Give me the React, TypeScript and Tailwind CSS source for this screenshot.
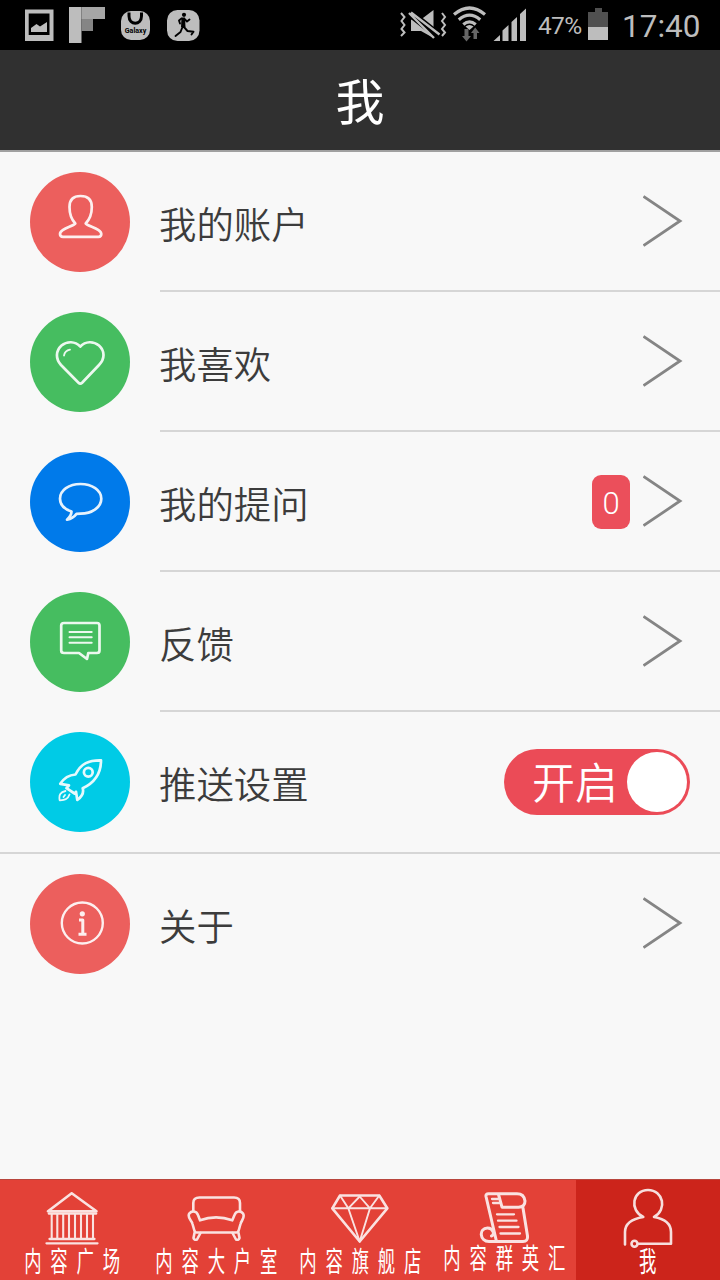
import React, { useState } from 'react';
import clsx from 'clsx';

const FONT = "font-['Roboto','Noto_Sans_CJK_SC',sans-serif]";
const STROKE = { fill: 'none', stroke: '#fff', strokeLinecap: 'round', strokeLinejoin: 'round' } as const;

interface Item { id: string; label: string; color: string; icon: React.ReactNode; badge?: number; toggle?: boolean; }

const ITEMS: Item[] = [
  {
    id: 'account', label: '我的账户', color: 'bg-[#ec5f5d]',
    icon: <path d="M45.3 51.5C41 47 39.5 42 39.5 35C39.5 27.5 43.5 24 50.5 24S61.8 27.5 61.8 35C61.8 42 60 47 55.7 51.5C57.5 54.5 71.3 56.5 71.3 62Q71.3 64.8 68.5 64.8H33Q30 64.8 30 62C30 56.5 43.5 54.5 45.3 51.5Z" />,
  },
  {
    id: 'likes', label: '我喜欢', color: 'bg-[#46bd60]',
    icon: <><path d="M50.3 34.5C45 29 37 29 31.5 33.5C25.5 39 25.5 47 31 53L48.5 70.7Q50.3 72.5 52.1 70.7L69 53C75 47 75 39 69 33.5C63.5 29 55.5 29 50.3 34.5Z" /><path d="M34 43.5Q34.8 38.7 40 37.7" strokeWidth="1.8" /></>,
  },
  {
    id: 'questions', label: '我的提问', color: 'bg-[#007aea]', badge: 0,
    icon: <path d="M41.5 59.5C34 57 30 52.5 30 46.7C30 38.3 39 32 50.5 32S71.3 38.3 71.3 46.7S62 61.7 50.5 61.7L46.5 61.9Q43 66.5 37 67.7Q41.5 63.5 41.5 59.5Z" />,
  },
  {
    id: 'feedback', label: '反馈', color: 'bg-[#46bd60]',
    icon: <><path d="M34 31H67Q69.5 31 69.5 33.5V58.5Q69.5 61 67 61H58.3L57 67L49 61H34Q31.2 61 31.2 58.5V33.5Q31.2 31 34 31Z" /><path d="M39.5 40H61.7M39.5 45.3H61.7M39.5 50.7H61.7" strokeWidth="2" /></>,
  },
  {
    id: 'push', label: '推送设置', color: 'bg-[#00cbe6]', toggle: true,
    icon: <><path d="M71 28.3C59 28 51 31.5 45.5 42.5C38 43 33 47.5 30.3 51.8L39 53.3L36.5 56.2L44.5 61.5L46 59.8L47.3 68C52 64.5 54 60.5 52.7 56.3C66 50 71 41 71 28.3Z" /><circle cx="58.3" cy="40.2" r="4.4" /><path d="M35.5 59Q28 60.5 29.7 68.3Q37.5 68.5 39.5 62.5M35 63L33.5 65" strokeWidth="1.8" /></>,
  },
  {
    id: 'about', label: '关于', color: 'bg-[#ec5f5d]',
    icon: <><circle cx="52.3" cy="49" r="20.5" strokeWidth="2.4" /><circle cx="52.3" cy="39.8" r="2.6" fill="#fff" stroke="none" /><path d="M49 46H52.8V60M48.5 60.3H56.5" strokeWidth="3" strokeLinecap="butt" /></>,
  },
];

const TABS = [
  {
    id: 'square', label: '内容广场',
    icon: <><path d="M71.7 14.3L48 32.3H96.5Z" /><path d="M49 34.5H96" /><path d="M51.7 35V59M57.3 35V59M63.2 35V59M69 35V59M75 35V59M81 35V59M87 35V59M93 35V59" strokeWidth="2.1" /><path d="M49.5 60H94.5M46.5 64.3H97.5" strokeWidth="2.3" /></>,
  },
  {
    id: 'vip', label: '内容大户室',
    icon: <><path d="M49.3 32V24Q49.3 18.5 55.5 18.5H90Q96 18.5 96 24V32" /><path d="M56 41.3Q72 35.5 88.3 41.3L90.5 36C92 31.5 97 31.5 99 34.5C101.5 38.5 97.5 41 96.5 45L94.5 52Q94 53.5 92.5 53.5H52.5Q51 53.5 50.5 52L48.5 45C47.5 41 42.8 38.5 45.3 34.5C47.5 31.5 52.5 31.5 54 36Z" /><path d="M50.5 54L49.5 59Q50 61.5 53 60.5L56.5 54M94.5 54L95.5 59Q95 61.5 92 60.5L88.5 54" /></>,
  },
  {
    id: 'store', label: '内容旗舰店',
    icon: <><path d="M52 16.5H91.3L99.3 29.3L71.7 62.5L44.3 29.3Z" /><path d="M44.3 29.3H99.3M52 16.5L60.3 29.3L71.7 17.5L82 29.3L91.3 16.5M60.3 29.3L71.7 62.5L82 29.3" strokeWidth="1.9" /></>,
  },
  {
    id: 'talent', label: '内容群英汇', raised: true,
    icon: <><path d="M64.5 62.5L54 17.5Q53.5 14.8 56.5 14.8H85Q92 14.8 93 22Q93 28 86.5 28.2H70L66.5 15.5" strokeWidth="3" /><path d="M91 29L95.5 57Q96 62.5 91 62.5H57C47.5 62.5 46.5 49 55.5 49C61.5 49 63 56 59.5 57" strokeWidth="3" /><path d="M60 20H66M61 24H67.5M65 35.3H82M66 41.7H84.5M67.5 48H86.5M68.5 54.5H88" strokeWidth="2.3" /></>,
  },
  {
    id: 'me', label: '我',
    icon: <path d="M49 65.5V53Q49 41 67.3 38C53 31 56.5 11 72 11S91.5 31 78 38Q95 41 95 53V64.7H61.5A3 3 0 1 0 55.5 64.7A3 3 0 1 0 61.5 64.7" />,
  },
];

export default function App() {
  const [activeTab, setActiveTab] = useState('me');
  const [pushOn, setPushOn] = useState(true);

  return (
    <div className={clsx('flex h-[1280px] w-[720px] flex-col overflow-hidden bg-[#f8f8f8]', FONT)}>
      <StatusBar />
      <header className="flex h-[102px] shrink-0 items-center justify-center border-b-2 border-[#a0a0a0] bg-[#303030]">
        <h1 className="pt-[7px] text-[49px] leading-none text-white">我</h1>
      </header>

      <main className="flex-1">
        {ITEMS.map(item => (
          <div key={item.id} className={clsx('flex pl-[30px]', item.toggle && 'border-b-2 border-[#d6d6d6]')}>
            <div className={clsx('mt-5 h-[100px] w-[100px] shrink-0 rounded-full', item.color)}>
              <svg viewBox="0 0 100 100" className="h-full w-full opacity-90" {...STROKE} strokeWidth="2.7">{item.icon}</svg>
            </div>
            <div className={clsx('ml-[30px] flex h-[140px] flex-1 items-center border-b-2', item.toggle || item.id === 'about' ? 'border-transparent' : 'border-[#d6d6d6]')}>
              <span className="-ml-px flex-1 pt-[11px] text-[37.4px] leading-none font-[350] text-[#3c3c3c]">{item.label}</span>
              {item.badge !== undefined && <span className="mt-0.5 mr-[13px] flex h-[54px] w-[38px] items-center justify-center rounded-[9px] bg-[#eb4f5b] pt-[3px] text-[31px] leading-none font-light text-white">{item.badge}</span>}
              {item.toggle ? <Toggle on={pushOn} onChange={() => setPushOn(!pushOn)} /> : <Arrow />}
            </div>
          </div>
        ))}
      </main>

      <nav className="flex h-[101px] shrink-0 bg-[#e34137]">
        {TABS.map(tab => (
          <button key={tab.id} onClick={() => setActiveTab(tab.id)} className={clsx('flex w-36 flex-col items-center border-t border-[#b8453d]', activeTab === tab.id && 'bg-[#cc241b]')}>
            <svg viewBox="0 1 144 67" className="h-[67px] w-36 shrink-0 overflow-visible opacity-85" {...STROKE} strokeWidth="2.6">{tab.icon}</svg>
            <span className={clsx('-mr-[9px] scale-x-[0.62] text-[28px] leading-[32px] tracking-[14.3px] whitespace-nowrap text-white', tab.raised && '-mt-[3px]')}>{tab.label}</span>
          </button>
        ))}
      </nav>
    </div>
  );
}

function Arrow() {
  return <svg viewBox="0 0 40 52" className="mr-[37px] h-[52px] w-10" fill="none" stroke="#858585" strokeWidth="2.8"><path d="M.5 1.3L37 26L.5 50.7" /></svg>;
}

function Toggle({ on, onChange }: { on: boolean; onChange: () => void }) {
  return (
    <button onClick={onChange} className={clsx('mt-0.5 mr-[30px] flex h-[66px] w-[186px] items-center justify-end rounded-full pr-[3px]', on ? 'bg-[#eb4b57]' : 'flex-row-reverse bg-gray-400')}>
      <span className="mr-[9px] pt-1 text-[43px] leading-none font-[350] text-white">{on ? '开启' : '关闭'}</span>
      <span className="h-[60px] w-[60px] rounded-full bg-white" />
    </button>
  );
}

function StatusBar() {
  return (
    <div className="flex h-[50px] shrink-0 items-center bg-black text-[#bdbdbd]">
      <svg viewBox="0 0 210 50" className="h-[50px] w-[210px]" fill="#bdbdbd">
        <path fillRule="evenodd" d="M25 9.5H53.5V41H25ZM28.7 13.5V35H49.5V13.5Z" />
        <path d="M31 32V28L36.5 24L40 26.5L47 22V32Z" />
        <path d="M69 7H81.5V43H69Z" /><path d="M81.5 7H105V19H81.5Z" fill="#a6a6a6" /><path d="M81.5 19H93V31H81.5Z" fill="#858585" />
        <rect x="121" y="11" width="29" height="29" rx="10" />
        <path d="M129 12.5V16C129 25.5 141.5 25.5 141.5 16V12.5" fill="none" stroke="#000" strokeWidth="3" />
        <text x="135.5" y="33" textAnchor="middle" fontSize="6.8" fontWeight="700" textLength="21.5" lengthAdjust="spacingAndGlyphs" fill="#000">Galaxy</text>
        <rect x="167" y="10" width="32.5" height="31" rx="10.5" />
        <circle cx="184" cy="14.8" r="2.1" fill="#000" />
        <path d="M181.5 18.5L179 20.5L180 23.5M184.5 19L187 21.5L189.5 19.5M182.5 27L180.5 32L175.5 36M183.5 26.5L187.5 31L193.5 31.8L191.5 34.5" fill="none" stroke="#000" strokeWidth="1.9" strokeLinecap="round" strokeLinejoin="round" />
        <path d="M181.5 17.5H185L185.5 27H181Z" fill="#000" />
      </svg>
      <div className="flex-1" />
      <svg viewBox="390 0 140 50" className="mr-2 h-[50px] w-[140px]" fill="#bdbdbd">
        <path d="M411 19.5H421L433.5 10V38L421 31H411Z" />
        <path d="M408 11.5L440 37" stroke="#000" strokeWidth="8" />
        <path d="M409 13L434 38M411 12.5L439.5 34.5" stroke="#bdbdbd" strokeWidth="2.4" />
        <path d="M401 13L404.5 17L401.5 21L404.5 25L401.5 29L404.5 32.5L401 36M442 13L445 17L442 21L445 25L442 29L445 32.5L442 36" fill="none" stroke="#bdbdbd" strokeWidth="2" />
        <path d="M454 14.5Q469.5 1.5 485 14.5M458.8 19.7Q469.5 10.5 480.2 19.7M463.3 24.4Q469.5 19.2 475.7 24.4" fill="none" stroke="#bdbdbd" strokeWidth="3.2" />
        <path d="M465.5 26.5Q469.5 23.5 473.5 26.5L469.5 30Z" />
        <path d="M464.5 29H468.5V36H471L466.5 41.5L462 36H464.5ZM473.5 39V33H471L475.2 27.5L479.5 33H477V39Z" fill="#666" />
        <path d="M493.5 41L500 35V41ZM502.5 41V30.5L508.5 25V41ZM511.5 41V22L517 17V41ZM520 41V14L526 8.5V41Z" />
      </svg>
      <span className="w-[44px] pt-[3px] text-[24.5px] leading-none tracking-[-0.7px]">47%</span>
      <svg viewBox="0 0 20 32" className="ml-1.5 h-8 w-5 -translate-y-px">
        <path d="M0 4H7V0H14V4H20V19H0Z" fill="#505050" /><path d="M0 19H20V32H0Z" fill="#bdbdbd" />
      </svg>
      <span className="mr-[21px] ml-[14px] w-[77px] pt-[3px] text-[31.5px] leading-none whitespace-nowrap">17:40</span>
    </div>
  );
}
